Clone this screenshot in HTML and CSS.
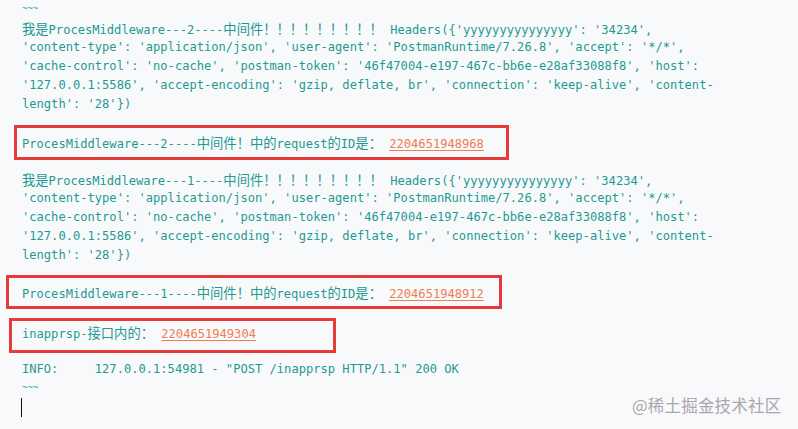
FILE: index.html
```html
<!DOCTYPE html>
<html lang="zh-CN">
<head>
<meta charset="utf-8">
<title>log</title>
<link rel="stylesheet" href="styles.css">
</head>
<body>
<div class="code">
  <div class="ln tilde">~~~</div>
  <div class="block">
    <div class="ln"><span class="cj">我是</span>ProcesMiddleware---2----<span class="cj">中间件！！！！！！！！！</span> Headers({'yyyyyyyyyyyyyyy': '34234',</div>
    <div class="ln">'content-type': 'application/json', 'user-agent': 'PostmanRuntime/7.26.8', 'accept': '*/*',</div>
    <div class="ln">'cache-control': 'no-cache', 'postman-token': '46f47004-e197-467c-bb6e-e28af33088f8', 'host':</div>
    <div class="ln">'127.0.0.1:5586', 'accept-encoding': 'gzip, deflate, br', 'connection': 'keep-alive', 'content-</div>
    <div class="ln">length': '28'})</div>
  </div>
  <div class="box box1">
    <div class="ln">ProcesMiddleware---2----<span class="cj">中间件！中的</span>request<span class="cj">的</span>ID<span class="cj">是：</span> <span class="num">2204651948968</span></div>
  </div>
  <div class="block block2">
    <div class="ln"><span class="cj">我是</span>ProcesMiddleware---1----<span class="cj">中间件！！！！！！！！！</span> Headers({'yyyyyyyyyyyyyyy': '34234',</div>
    <div class="ln">'content-type': 'application/json', 'user-agent': 'PostmanRuntime/7.26.8', 'accept': '*/*',</div>
    <div class="ln">'cache-control': 'no-cache', 'postman-token': '46f47004-e197-467c-bb6e-e28af33088f8', 'host':</div>
    <div class="ln">'127.0.0.1:5586', 'accept-encoding': 'gzip, deflate, br', 'connection': 'keep-alive', 'content-</div>
    <div class="ln">length': '28'})</div>
  </div>
  <div class="box box2">
    <div class="ln">ProcesMiddleware---1----<span class="cj">中间件！中的</span>request<span class="cj">的</span>ID<span class="cj">是：</span> <span class="num">2204651948912</span></div>
  </div>
  <div class="box box3">
    <div class="ln">inapprsp-<span class="cj">接口内的：</span> <span class="num">2204651949304</span></div>
  </div>
  <div class="ln info">INFO:     127.0.0.1:54981 - "POST /inapprsp HTTP/1.1" 200 OK</div>
  <div class="ln tilde">~~~</div>
  <div class="ln"><span class="cursor"></span></div>
</div>
<div class="watermark">@稀土掘金技术社区</div>
</body>
</html>
```

FILE: styles.css
```css
html, body {
  margin: 0;
  padding: 0;
  background: #f8f9fb;
  overflow: hidden;
}
body {
  width: 798px;
  height: 429px;
  position: relative;
}
.code {
  padding-left: 22px;
  font-family: "DejaVu Sans Mono", "Noto Sans CJK SC", monospace;
  font-size: 12.1px;
  color: #1f9a92;
}
.ln {
  height: 19px;
  line-height: 19px;
  white-space: pre;
}
.cj {
  font-family: "Noto Sans CJK SC", sans-serif;
  font-size: 13.3px;
}
.tilde {
  font-size: 9px;
  line-height: 17px;
}
.block {
  display: flex;
  flex-direction: column;
}
.box {
  border: 3px solid #e53b3b;
  box-sizing: border-box;
}
.box1 {
  margin-top: 11px;
  margin-left: -8px;
  width: 495px;
  height: 35px;
  padding: 5px 0 0 5px;
}
.block2 {
  margin-top: 10px;
}
.box2 {
  margin-top: 10px;
  margin-left: -16px;
  width: 496px;
  height: 34px;
  padding: 5px 0 0 13px;
}
.box3 {
  margin-top: 9px;
  margin-left: -13px;
  width: 327px;
  height: 35px;
  padding: 2px 0 0 10px;
}
.info {
  margin-top: 7px;
}
.num {
  color: #ee7d52;
  text-decoration: underline;
  text-underline-offset: 2px;
}
.cursor {
  display: inline-block;
  width: 1px;
  height: 19px;
  margin-left: -1px;
  background: #111;
  vertical-align: top;
}
.watermark {
  position: absolute;
  left: 632px;
  top: 394px;
  font-family: "Noto Sans CJK SC", sans-serif;
  font-size: 16.5px;
  line-height: 22px;
  color: #a8a8ab;
  letter-spacing: 0.2px;
}
```
